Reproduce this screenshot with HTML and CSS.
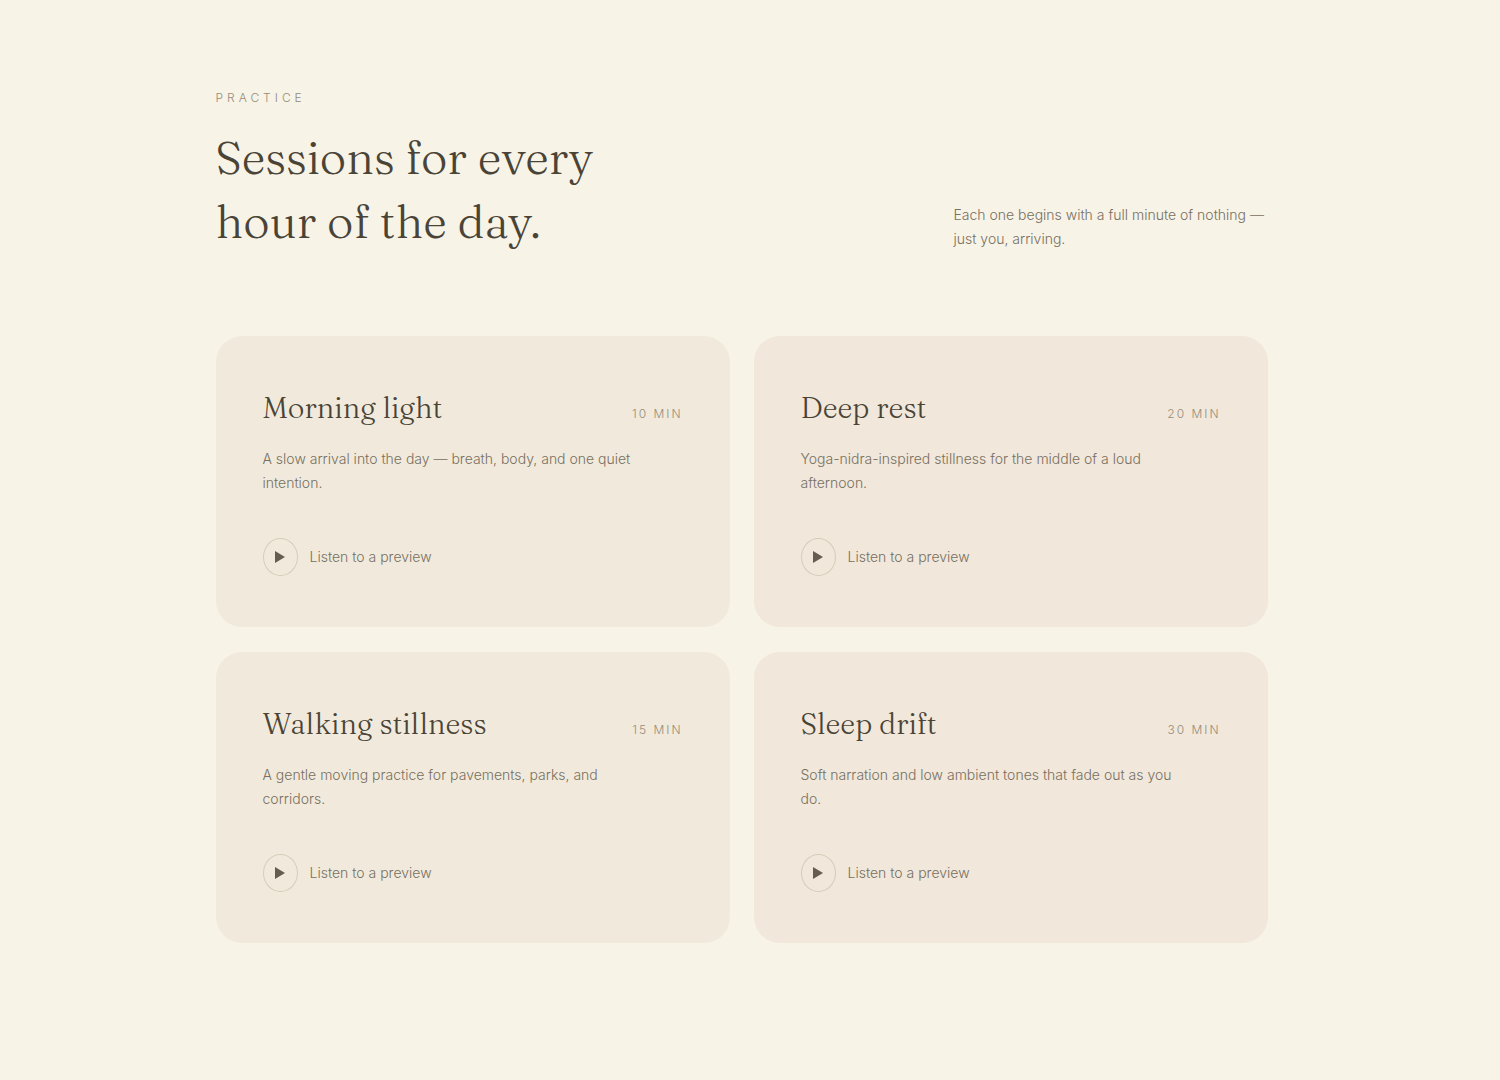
FILE: index.html
```html
<!DOCTYPE html>
<html lang="en">
<head>
    <meta charset="UTF-8">
    <meta name="viewport" content="width=device-width, initial-scale=1.0">
    <title>Practice</title>
    <link rel="stylesheet" href="styles.css">
</head>
<body>
    <main class="practice">
        <header class="intro">
            <div>
                <p class="eyebrow">Practice</p>
                <h1>Sessions for every<br>hour of the day.</h1>
            </div>
            <p class="intro-note">Each one begins with a full minute of nothing — just you, arriving.</p>
        </header>

        <div class="sessions">
            <article class="card">
                <div class="card-head">
                    <h2>Morning light</h2>
                    <span class="duration">10 MIN</span>
                </div>
                <p class="description">A slow arrival into the day — breath, body, and one quiet intention.</p>
                <button type="button" class="preview">
                    <span class="play"><svg viewBox="0 0 10 12" width="10" height="12" aria-hidden="true"><path d="M0 0L10 6L0 12Z"/></svg></span>
                    Listen to a preview
                </button>
            </article>

            <article class="card card-rose">
                <div class="card-head">
                    <h2>Deep rest</h2>
                    <span class="duration">20 MIN</span>
                </div>
                <p class="description">Yoga-nidra-inspired stillness for the middle of a loud afternoon.</p>
                <button type="button" class="preview">
                    <span class="play"><svg viewBox="0 0 10 12" width="10" height="12" aria-hidden="true"><path d="M0 0L10 6L0 12Z"/></svg></span>
                    Listen to a preview
                </button>
            </article>

            <article class="card">
                <div class="card-head">
                    <h2>Walking stillness</h2>
                    <span class="duration">15 MIN</span>
                </div>
                <p class="description">A gentle moving practice for pavements, parks, and corridors.</p>
                <button type="button" class="preview">
                    <span class="play"><svg viewBox="0 0 10 12" width="10" height="12" aria-hidden="true"><path d="M0 0L10 6L0 12Z"/></svg></span>
                    Listen to a preview
                </button>
            </article>

            <article class="card card-rose">
                <div class="card-head">
                    <h2>Sleep drift</h2>
                    <span class="duration">30 MIN</span>
                </div>
                <p class="description">Soft narration and low ambient tones that fade out as you do.</p>
                <button type="button" class="preview">
                    <span class="play"><svg viewBox="0 0 10 12" width="10" height="12" aria-hidden="true"><path d="M0 0L10 6L0 12Z"/></svg></span>
                    Listen to a preview
                </button>
            </article>
        </div>
    </main>
</body>
</html>
```
FILE: styles.css
```css
* {
    box-sizing: border-box;
}
body {
    margin: 0;
    padding: 89px 41px 89px 24px;
    background-color: #f8f3e7;
    color: #777061;
    font-family: Inter, "Liberation Sans", sans-serif;
    font-size: 14px;
    font-weight: 300;
    line-height: 24px;
}
h1, h2, p {
    margin: 0;
}
h1, h2 {
    font-family: Fraunces, "Liberation Serif", serif;
    font-weight: 300;
    color: #4a4437;
}
.practice {
    max-width: 1052px;
    margin: 0 auto;
}

/* Heading */
.intro {
    display: flex;
    justify-content: space-between;
    align-items: flex-end;
    gap: 24px;
    margin-bottom: 82px;
}
.eyebrow {
    margin-bottom: 19px;
    font-size: 12px;
    line-height: 18px;
    letter-spacing: 4px;
    text-transform: uppercase;
    color: #958d7a;
}
h1 {
    font-size: 46px;
    line-height: 64px;
}
.intro-note {
    max-width: 314px;
    padding-bottom: 3px;
}

/* Session cards */
.sessions {
    display: grid;
    grid-template-columns: repeat(auto-fit, minmax(400px, 1fr));
    gap: 25px 24px;
}
.card {
    padding: 50px 47px 51px;
    border-radius: 26px;
    background-color: #f1eadc;
}
.card-rose {
    background-color: #f1e7da;
}
.card-head {
    display: flex;
    justify-content: space-between;
    align-items: baseline;
    margin-bottom: 17px;
}
h2 {
    font-size: 29px;
    line-height: 44px;
}
.duration {
    font-size: 12px;
    line-height: 18px;
    letter-spacing: 2px;
    color: #958d7a;
}
.description {
    max-width: 376px;
}
.preview {
    display: flex;
    align-items: center;
    gap: 12px;
    margin-top: 43px;
    padding: 0;
    border: none;
    background: none;
    color: inherit;
    font: inherit;
    cursor: pointer;
}
.play {
    display: flex;
    align-items: center;
    justify-content: center;
    width: 35px;
    height: 38px;
    border: 1px solid #d5ccb9;
    border-radius: 50%;
}
.play svg {
    fill: #655d4f;
}
```
